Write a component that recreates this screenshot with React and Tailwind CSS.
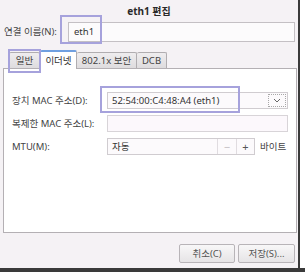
import React from "react";

const font = { fontFamily: '"Noto Sans", "Noto Sans CJK KR", sans-serif' };

export default function App() {
  return (
    <div className="w-[305px] h-[272px] overflow-hidden bg-white flex flex-col text-[9.5px] leading-none whitespace-nowrap text-[#3a3a3a]" style={font}>
      <div className="flex h-[268px]">
        <div className="relative w-[298px] h-[268px] bg-[#f5f2f5] flex flex-col">
          {/* title */}
          <div className="h-[20px] flex items-center justify-center font-bold text-[10px] text-[#2a2a2a] pt-[1px]">
            eth1 편집
          </div>
          {/* name row */}
          <div className="mt-[2px] flex items-center h-[20px]">
            <div className="w-[68px] pl-[4px] text-[#444]">연결 이름(N):</div>
            <div className="w-[227px] h-[20px] border border-[#c4c0c4] bg-[#fcfbfc] flex items-center pl-[5px] text-[#333]">
              eth1
            </div>
          </div>
          {/* tabs */}
          <div className="mt-[7px] flex items-end h-[19px] pl-[9px] relative z-10">
            <div className="w-[31px] h-[16px] border border-[#b0adb0] border-b-0 rounded-t-[2px] bg-gradient-to-b from-[#efedef] to-[#dedcde] flex items-center justify-center text-[#444]">
              일반
            </div>
            <div className="w-[37px] h-[19px] border border-[#b0adb0] border-t-2 border-t-[#6f9fe0] border-b-0 rounded-t-[2px] bg-white flex items-center justify-center text-[#333] -mb-[1px]">
              이더넷
            </div>
            <div className="w-[60px] h-[16px] border border-[#b0adb0] border-l-0 border-b-0 rounded-t-[2px] bg-gradient-to-b from-[#efedef] to-[#dedcde] flex items-center justify-center text-[#444]">
              802.1x 보안
            </div>
            <div className="w-[30px] h-[16px] border border-[#b0adb0] border-l-0 border-b-0 rounded-t-[2px] bg-gradient-to-b from-[#efedef] to-[#dedcde] flex items-center justify-center text-[#444]">
              DCB
            </div>
          </div>
          {/* panel */}
          <div className="ml-[3px] w-[294px] h-[165px] border border-[#b4b0b4] bg-white pt-[23px] flex flex-col gap-[6px]">
            <div className="flex items-center h-[17px]">
              <div className="w-[103px] pl-[8px] text-[#444]">장치 MAC 주소(D):</div>
              <div className="w-[181px] h-[17px] border border-[#d0ccd0] bg-[#fcfafc] flex items-center justify-between pl-[4px] pr-[1px] text-[#333]">
                <span>52:54:00:C4:48:A4 (eth1)</span>
                <div className="w-[18px] h-[13px] border border-dotted border-[#a8a8a8] flex items-center justify-center">
                  <svg width="8" height="5" viewBox="0 0 8 5">
                    <path d="M1 1 L4 4 L7 1" fill="none" stroke="#666" strokeWidth="1" />
                  </svg>
                </div>
              </div>
            </div>
            <div className="flex items-center h-[17px]">
              <div className="w-[103px] pl-[8px] text-[#444]">복제한 MAC 주소(L):</div>
              <div className="w-[181px] h-[17px] border border-[#d8d4d8] bg-[#fcf8fc]"></div>
            </div>
            <div className="flex items-center h-[17px]">
              <div className="w-[103px] pl-[8px] text-[#444]">MTU(M):</div>
              <div className="w-[148px] h-[17px] border border-[#d0ccd0] bg-[#fcfafc] flex items-center text-[#333]">
                <span className="flex-1 pl-[4px]">자동</span>
                <div className="w-[19px] h-full border-l border-[#e0dce0] flex items-center justify-center text-[#c0bcc0] text-[11px]">−</div>
                <div className="w-[18px] h-full border-l border-[#e0dce0] flex items-center justify-center text-[#555] text-[11px]">+</div>
              </div>
              <div className="ml-[5px] text-[#444]">바이트</div>
            </div>
          </div>
          {/* buttons */}
          <div className="mt-[11px] flex justify-end gap-[3px] pr-[3px]">
            <div className="w-[56px] h-[19px] border border-[#b8b4b8] rounded-[2px] bg-gradient-to-b from-[#f8f7f8] to-[#e6e4e6] flex items-center justify-center text-[#555]">
              취소(C)
            </div>
            <div className="w-[57px] h-[19px] border border-[#b8b4b8] rounded-[2px] bg-gradient-to-b from-[#f8f7f8] to-[#e6e4e6] flex items-center justify-center text-[#555]">
              저장(S)...
            </div>
          </div>
          {/* highlight overlays */}
          <div className="absolute left-[60px] top-[15px] w-[42px] h-[29px] border-2 border-[#a6a2dc] pointer-events-none z-20"></div>
          <div className="absolute left-[8px] top-[49px] w-[33px] h-[24px] border-2 border-[#a6a2dc] pointer-events-none z-20"></div>
          <div className="absolute left-[100px] top-[86px] w-[140px] h-[27px] border-2 border-[#a6a2dc] pointer-events-none z-20"></div>
        </div>
        <div className="w-[2px] h-full bg-[#3a3a3a]"></div>
        <div className="flex-1 bg-white"></div>
      </div>
      <div className="h-[4px] bg-[#3a3a3a]"></div>
    </div>
  );
}
